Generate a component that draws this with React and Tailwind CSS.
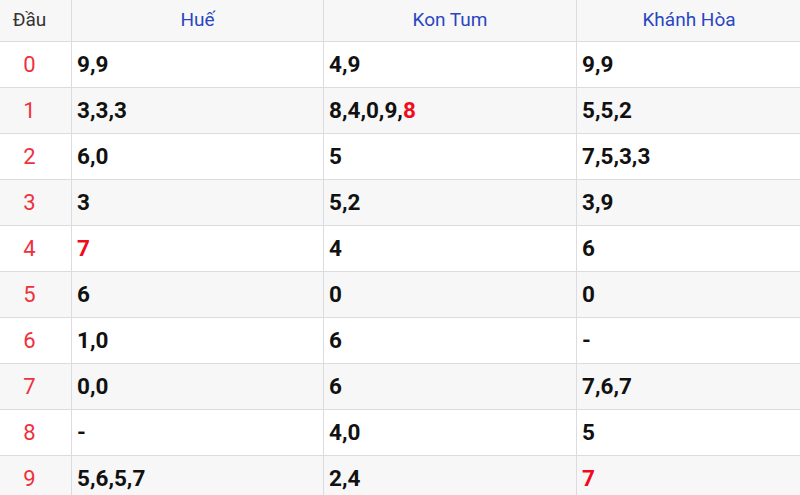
const heads = ['Huế', 'Kon Tum', 'Khánh Hòa'];

// each cell: list of digits; a trailing "!" marks a highlighted (red) digit
const rows = [
  ['9,9', '4,9', '9,9'],
  ['3,3,3', '8,4,0,9,8!', '5,5,2'],
  ['6,0', '5', '7,5,3,3'],
  ['3', '5,2', '3,9'],
  ['7!', '4', '6'],
  ['6', '0', '0'],
  ['1,0', '6', '-'],
  ['0,0', '6', '7,6,7'],
  ['-', '4,0', '5'],
  ['5,6,5,7', '2,4', '7!'],
];

const cols = 'grid grid-cols-[72px_252px_253px_224px]';

function Loto({ value }) {
  const parts = value.split(',');
  return (
    <>
      {parts.map((p, i) => {
        const hot = p.endsWith('!');
        return (
          <span key={i}>
            <span className={hot ? 'text-[#f00c1c]' : ''}>{hot ? p.slice(0, -1) : p}</span>
            {i < parts.length - 1 && ','}
          </span>
        );
      })}
    </>
  );
}

export default function App() {
  return (
    <div className="w-[800px] h-[495px] overflow-hidden bg-white font-['Roboto',sans-serif]">
      <div className={`${cols} h-[42px] bg-[#f7f7f8] border-b border-[#dcdce0]`}>
        <div className="flex items-center justify-center pr-[12px] border-r border-[#dcdce0] text-[19px] text-[#333]">Đầu</div>
        {heads.map((h, i) => (
          <div
            key={h}
            className={`flex items-center justify-center text-[19px] text-[#2a46c0] ${i < 2 ? 'border-r border-[#dcdce0]' : ''}`}
          >
            {h}
          </div>
        ))}
      </div>
      {rows.map((r, n) => (
        <div
          key={n}
          className={`${cols} h-[46px] border-b border-[#dcdce0] ${n % 2 ? 'bg-[#f7f7f7]' : 'bg-white'}`}
        >
          <div className="flex items-center justify-center pr-[12px] border-r border-[#dcdce0] text-[22px] text-[#f0313d]">{n}</div>
          {r.map((v, i) => (
            <div
              key={i}
              className={`flex items-center pl-[5px] text-[22.5px] font-bold text-[#111] ${i < 2 ? 'border-r border-[#dcdce0]' : ''}`}
            >
              <Loto value={v} />
            </div>
          ))}
        </div>
      ))}
    </div>
  );
}
